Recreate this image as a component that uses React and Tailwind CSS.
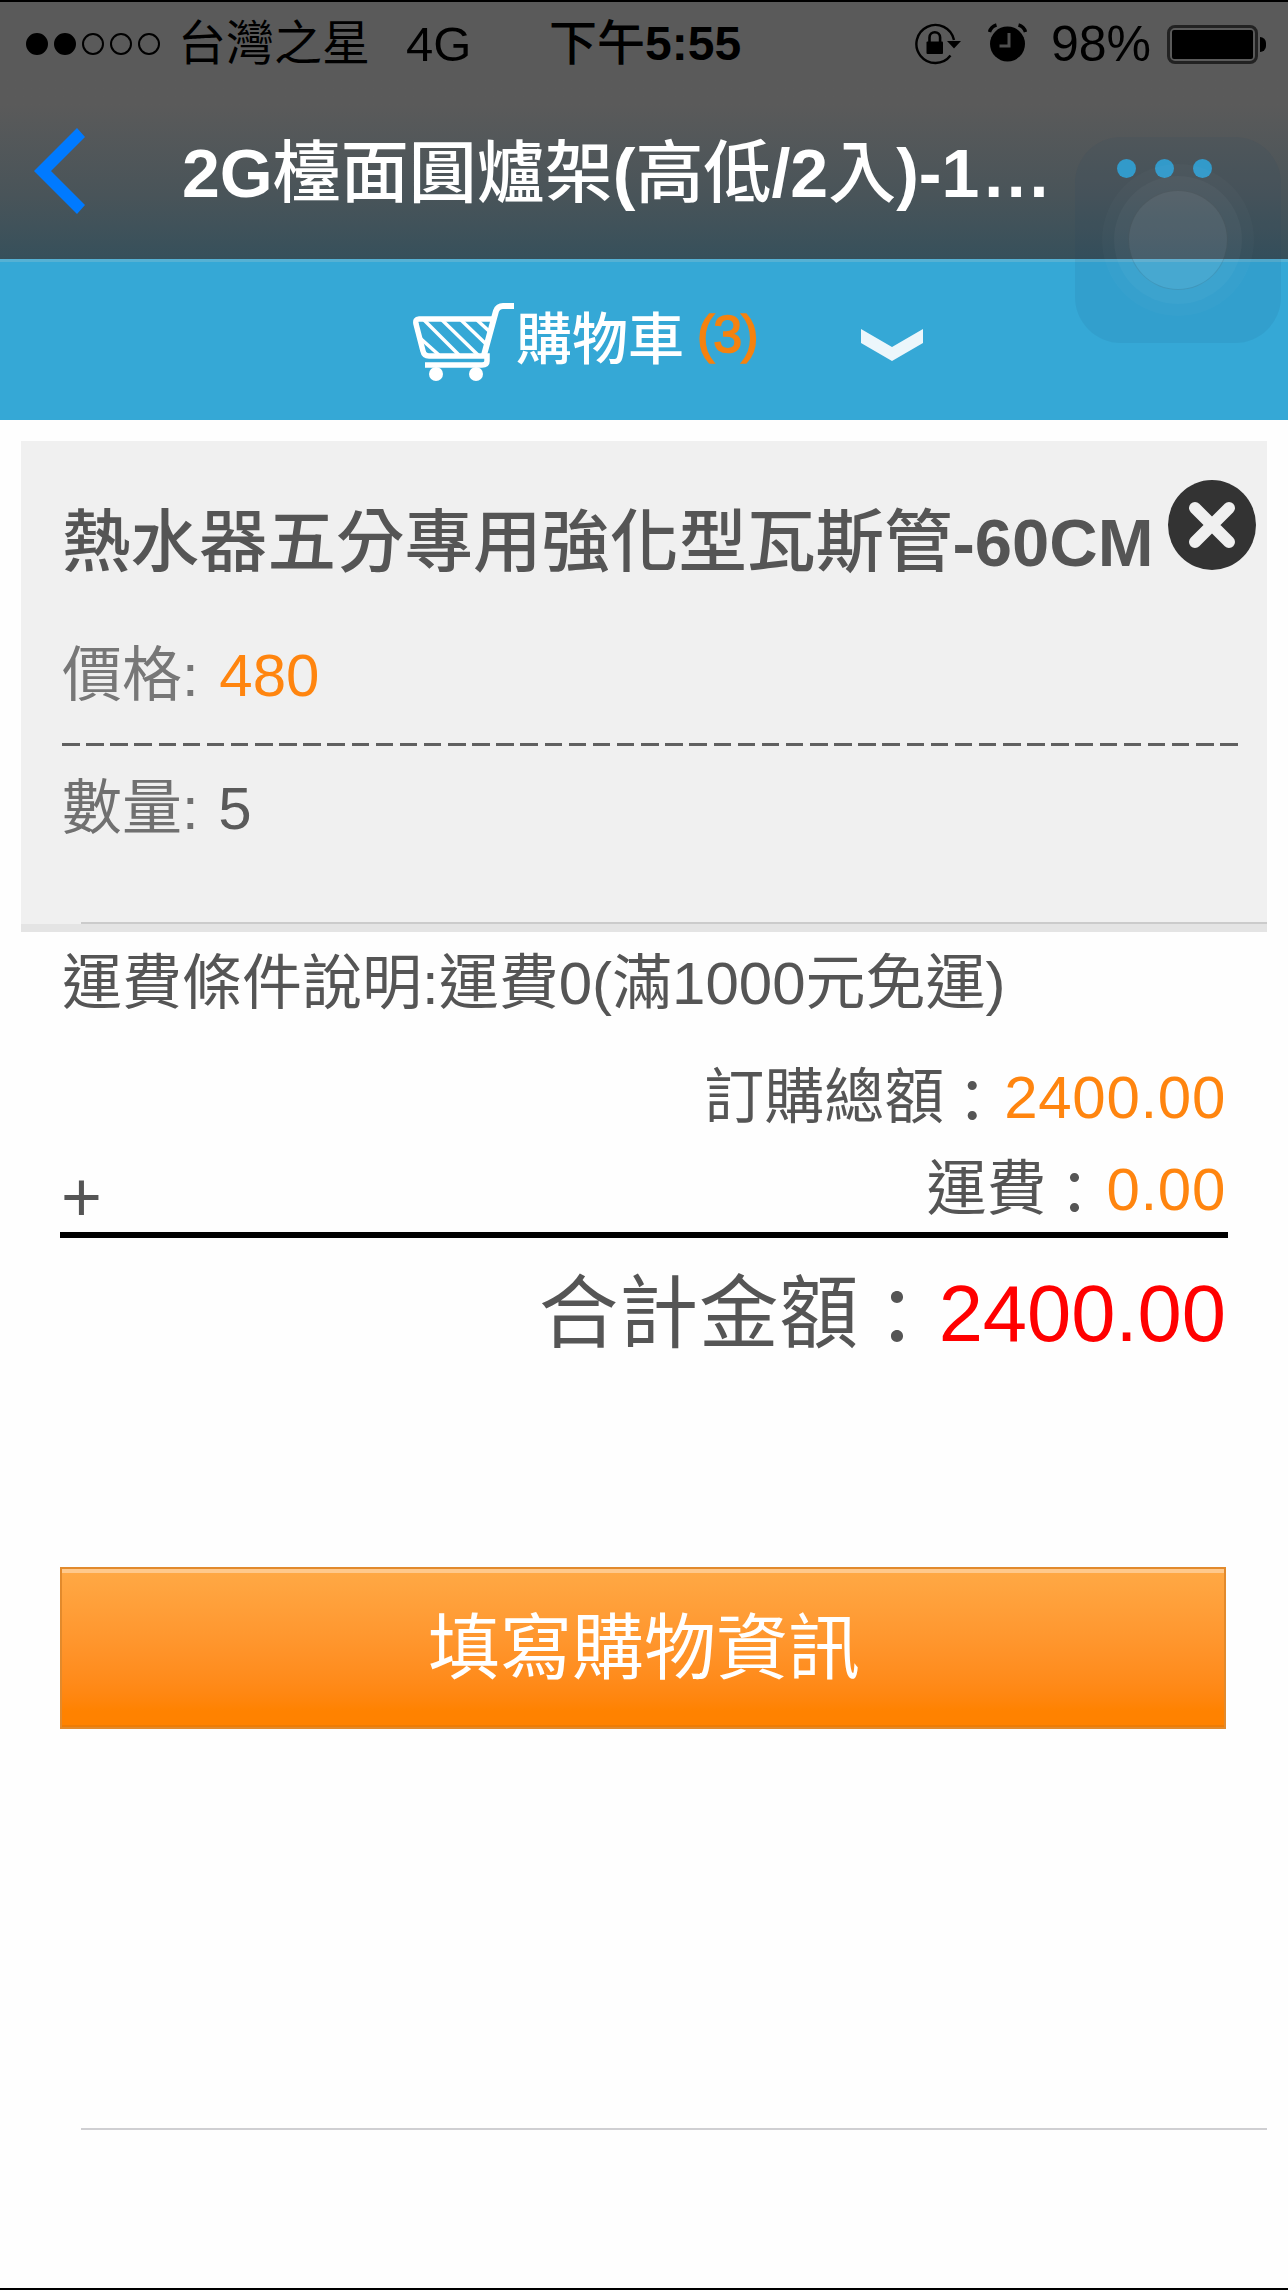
const cartItem = {
  name: "熱水器五分專用強化型瓦斯管",
  size: "-60CM",
  price: 480,
  quantity: 5,
};

const StatusBar = () => (
  <div className="flex h-[84px] items-center text-[48px] leading-[84px] text-black">
    <div className="flex w-[549px] items-center pl-[26px]">
      <div className="flex gap-[6px]">
        {[true, true, false, false, false].map((filled, i) => (
          <span
            key={i}
            className={`h-[22px] w-[22px] rounded-full border-2 border-black ${filled ? "bg-black" : ""}`}
          />
        ))}
      </div>
      <span className="ml-[18px]">台灣之星</span>
      <span className="ml-[36px] text-[49px]">4G</span>
    </div>
    <span className="font-medium">
      下午<span className="font-bold">5:55</span>
    </span>

    <div className="ml-auto flex items-center pr-[22px]">
      {/* rotation lock */}
      <svg className="-mt-[2px]" width="48" height="44" viewBox="0 0 48 44" fill="none">
        <path
          d="M36.5 34.5A19 19 0 1 1 40 19"
          stroke="#000"
          strokeWidth="2.4"
        />
        <path d="M33 20h14l-7 7.500z" fill="#000" />
        <rect x="12.500" y="20.500" width="16.500" height="12.500" rx="1" fill="#000" />
        <path d="M15.500 21v-4.500a5.300 5.300 0 0 1 10.600 0v4.500" stroke="#000" strokeWidth="2.6" />
      </svg>
      {/* alarm */}
      <svg className="-mt-[2px] ml-[25px]" width="42" height="44" viewBox="0 0 42 44" fill="none">
        <circle cx="20.5" cy="23" r="17.5" fill="#000" />
        <path d="M2.5 11C3.5 7.5 6 5 9.5 4M38.5 11C37.5 7.5 35 5 31.5 4" stroke="#000" strokeWidth="3.4" />
        <path d="M22 12v13h-9.500" stroke="#4f4f4f" strokeWidth="3" />
      </svg>
      <span className="ml-[22px] text-[50px]">98%</span>
      <div className="ml-[16px] flex h-[39px] w-[91px] rounded-[8px] border-[3px] border-[#222] p-[2px]">
        <div className="flex-1 rounded-[2px] bg-black" />
      </div>
      <div className="ml-[2px] h-[15px] w-[6px] rounded-r-full bg-black" />
    </div>
  </div>
);

const NavBar = () => (
  <div className="flex h-[173px] items-center">
    <svg className="-mt-[4px] ml-[34px]" width="52" height="88" viewBox="0 0 52 88">
      <path d="M43 1l8 9L17 44l34 34-8 9L0 44z" fill="#007aff" />
    </svg>
    <h1 className="ml-[96px] w-[870px] whitespace-nowrap text-[68px] font-medium leading-[80px] text-white">
      <span className="font-bold">2G</span>檯面圓爐架<span className="font-bold">(</span>
      高低<span className="font-bold">/2</span>入<span className="font-bold">)-1</span>
      <span className="ml-[5px] font-bold tracking-[3.7px]">...</span>
    </h1>
    <div className="-mt-[8px] ml-[65px] flex gap-[19px]">
      <span className="h-[19px] w-[19px] rounded-full bg-[#35a2d3]" />
      <span className="h-[19px] w-[19px] rounded-full bg-[#35a2d3]" />
      <span className="h-[19px] w-[19px] rounded-full bg-[#35a2d3]" />
    </div>
  </div>
);

const CartIcon = () => (
  <svg className="mt-[2px]" width="102" height="80" viewBox="0 0 102 80" fill="none" stroke="#fff">
    <path d="M101 4H90q-5 0-7 5l-12 44" strokeWidth="6" />
    <path d="M79 17H6q-4 0-3 5l7 27q1 5 6 5h53" strokeWidth="5.5" />
    <path
      d="M7 36l19 17M11 18l35 35M29 18l36 35M48 18l25 24M64 18l13 12"
      strokeWidth="3.5"
    />
    <path d="M69 54h5v5q0 4-5 4H12" strokeWidth="5.5" />
    <circle cx="23" cy="72" r="7" fill="#fff" stroke="none" />
    <circle cx="63" cy="72" r="7" fill="#fff" stroke="none" />
  </svg>
);

const CartBar = () => (
  <div className="flex h-[161px] items-center border-t-[3px] border-[#55b1d4] bg-[#35a8d6] pl-[413px]">
    <CartIcon />
    <span className="-mt-[2px] ml-[1px] text-[56px] font-medium leading-[60px] text-white">
      購物車
    </span>
    <span className="-mt-[14px] ml-[13px] w-[59px] text-[52px] leading-[60px] tracking-[-1px] text-[#f5820f] [-webkit-text-stroke:1.6px_#f5820f]">
      (3)
    </span>
    <svg className="mt-[8px] ml-[105px]" width="62" height="32" viewBox="0 0 62 32">
      <path d="M0 0l31 18L62 0v14L31 32 0 14z" fill="#ecf6fb" />
    </svg>
  </div>
);

const CartCard = ({ item }) => (
  <div className="relative mx-[21px] mt-[21px] h-[491px] bg-[#f0f0f0] pt-[64px] pl-[41px] text-[60px] text-[#5a5a5a]">
    <h2 className="whitespace-nowrap text-[68.5px] font-medium leading-[76px] text-[#555]">
      {item.name}
      <span className="text-[67px] font-bold">{item.size}</span>
    </h2>
    <p className="mt-[57px] leading-[76px]">
      <span className="text-[#777]">價格:</span>{" "}
      <span className="ml-[4px] text-[#ff850f]">{item.price}</span>
    </p>
    <div className="mt-[29px] h-[3px] w-[1176px] bg-[repeating-linear-gradient(90deg,#606060_0_17.5px,transparent_17.5px_24.13px)]" />
    <p className="mt-[25px] leading-[76px]">
      <span className="text-[#707070]">數量:</span>{" "}
      <span className="ml-[3px]">{item.quantity}</span>
    </p>
    <div className="absolute inset-x-0 bottom-0 h-[8px] bg-[#e4e4e4]" />
    <div className="absolute right-0 bottom-[8px] left-[60px] h-[2px] bg-[#cbcbcb]" />

    <button className="absolute top-[39px] right-[11px]">
      <svg width="88" height="90" viewBox="0 0 88 90">
        <ellipse cx="44" cy="45" rx="44" ry="45" fill="#333" />
        <path
          d="M27 28l34 34M61 28L27 62"
          stroke="#f0f0f0"
          strokeWidth="12"
          strokeLinecap="round"
        />
      </svg>
    </button>
  </div>
);

// full-width colon, lowered to sit level with the digits
const Colon = () => <span className="inline-block -translate-x-[2px] translate-y-[5px]">：</span>;

const Summary = () => (
  <div className="px-[60px] text-[60px] text-[#555]">
    <p className="mt-[14px] pl-[2px] leading-[76px]">運費條件說明:運費0(滿1000元免運)</p>
    <p className="mt-[38px] pr-[2px] text-right leading-[76px]">
      訂購總額
      <Colon />
      <span className="tracking-[0.7px] text-[#ff850f]">2400.00</span>
    </p>
    <div className="mt-[16px] flex h-[76px] items-start justify-between pr-[2px] leading-[76px]">
      <span className="pl-[1px] text-[70px] leading-[90px]">+</span>
      <span>
        運費
        <Colon />
        <span className="tracking-[0.7px] text-[#ff850f]">0.00</span>
      </span>
    </div>
    <div className="mt-[4px] h-[6px] bg-black" />
    <p className="mt-[26px] pr-[2px] text-right text-[79.5px] leading-[100px]">
      <span className="tracking-[0.6px]">合計金額</span>
      <Colon />
      <span className="text-[#ff0000]">2400.00</span>
    </p>
    <button className="mt-[203px] flex h-[162px] w-[1166px] items-center justify-center border-2 border-[#e28a2c] bg-linear-to-b from-[#ffa945] to-[#ff8200] to-90% pl-[2px] text-[72px] text-white shadow-[inset_0_4px_0_#ffc98c,inset_0_-2px_0_#ee7c05]">
      填寫購物資訊
    </button>
  </div>
);

// iOS AssistiveTouch button floating above the page
const AssistiveTouch = () => (
  <div className="absolute top-[137px] left-[1075px] flex h-[206px] w-[206px] items-center justify-center rounded-[46px] bg-[#1b4468]/8">
    <div className="flex h-[152px] w-[152px] items-center justify-center rounded-full bg-white/2">
      <div className="flex h-[128px] w-[128px] items-center justify-center rounded-full bg-white/3">
        <div className="h-[100px] w-[100px] rounded-full border border-black/10 bg-white/6" />
      </div>
    </div>
  </div>
);

const App = () => {
  return (
    <div
      lang="zh-TW"
      className="relative flex h-[2290px] w-[1288px] flex-col overflow-hidden border-b-2 border-black bg-[#fefefe] font-['Liberation_Sans','Noto_Sans_CJK_TC',sans-serif]"
    >
      <header className="h-[259px] border-t-2 border-black bg-linear-to-b from-[#5a5a5a] from-40% via-[#495459] via-75% to-[#36505b]">
        <StatusBar />
        <NavBar />
      </header>
      <CartBar />
      <CartCard item={cartItem} />
      <Summary />
      <div className="mt-[399px] mr-[21px] ml-[81px] h-[2px] bg-[#cfcfd2]" />
      <AssistiveTouch />
    </div>
  );
};

export default App;
